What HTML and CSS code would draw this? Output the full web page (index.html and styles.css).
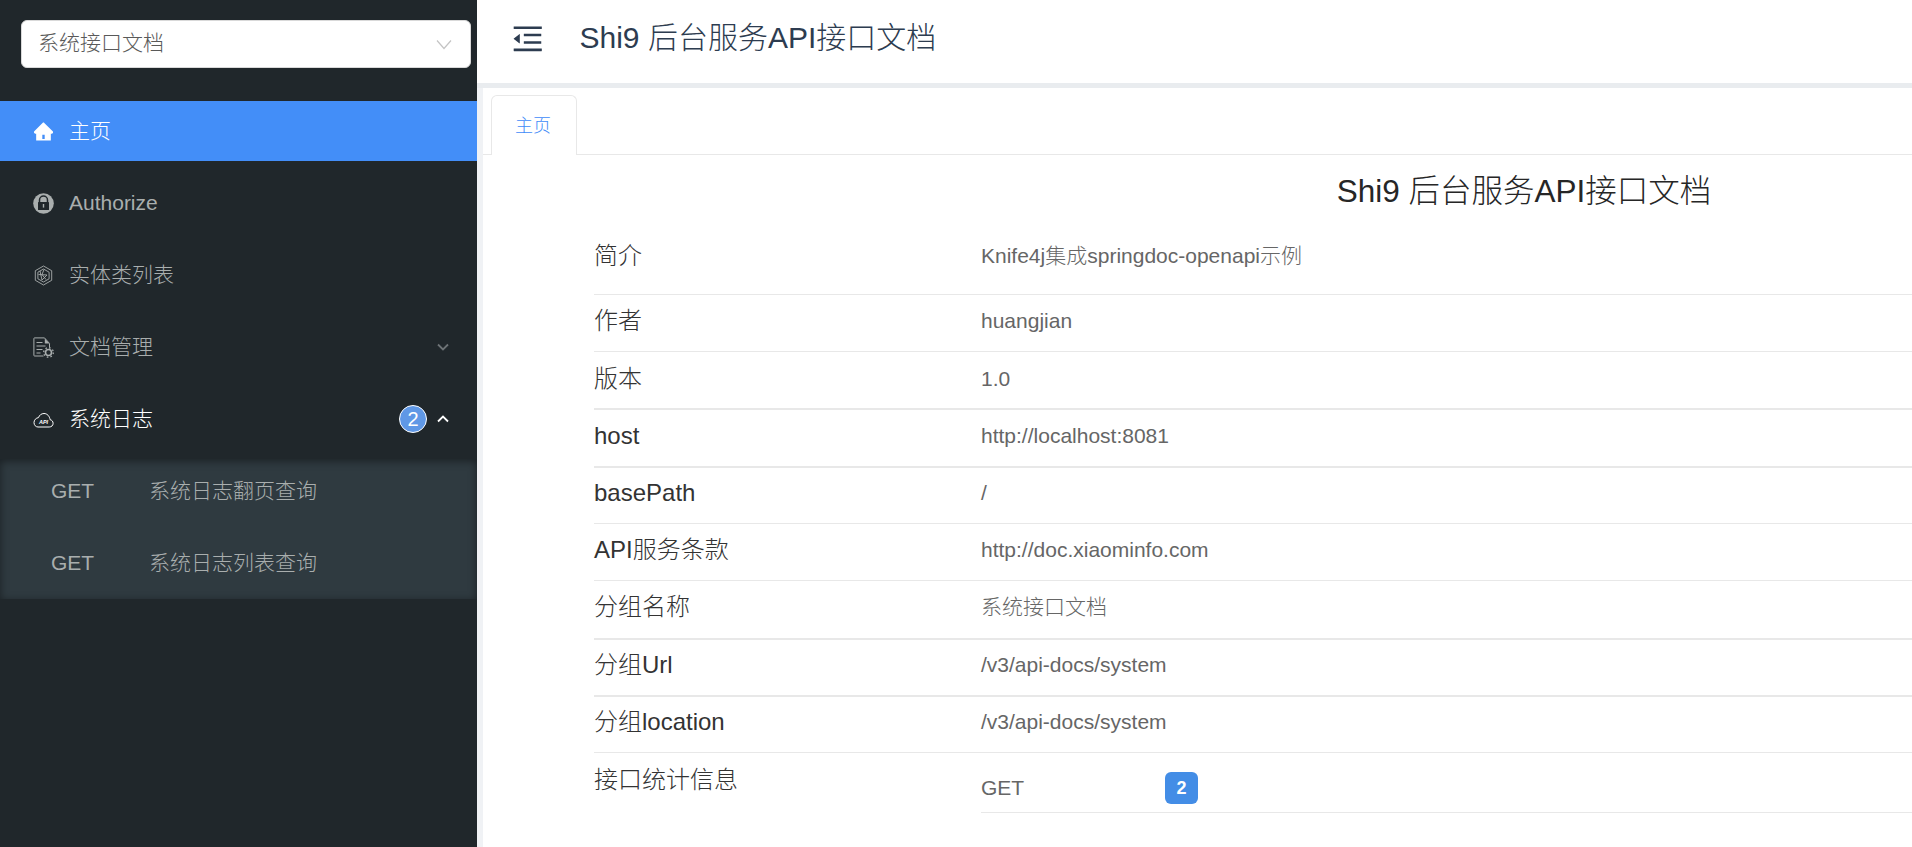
FILE: index.html
```html
<!DOCTYPE html>
<html lang="zh-CN">
<head>
<meta charset="utf-8">
<title>Shi9 后台服务API接口文档</title>
<link rel="stylesheet" href="styles.css">
</head>
<body>
<div class="app">
  <aside class="sidebar">
    <div class="select">
      <span>系统接口文档</span>
      <svg class="select-arrow" viewBox="0 0 16 10"><path d="M1 1l7 8 7-8" fill="none" stroke="#c4c4c4" stroke-width="1.2"/></svg>
    </div>
    <nav class="menu">
      <a class="item active">
        <span class="icon-box"><svg class="icon-home" viewBox="64 64 896 896"><path fill="currentColor" d="M946.5 505L560.1 118.8l-25.9-25.9a31.5 31.5 0 0 0-44.4 0L77.5 505a63.9 63.9 0 0 0-18.8 46c.4 35.2 29.7 63.3 64.9 63.3h42.5V940h691.8V614.3h43.4c17.1 0 33.2-6.7 45.3-18.8a63.6 63.6 0 0 0 18.7-45.3c0-17-6.7-33.1-18.8-45.2zM568 868H456V664h112v204z"/></svg></span>
        <span class="item-text">主页</span>
      </a>
      <a class="item">
        <svg class="icon" viewBox="0 0 21 21"><circle cx="10.5" cy="10.5" r="10.3" fill="#a9aeae"/><path d="M6.5 9.5V7a4 4 0 0 1 8 0v2.500" fill="none" stroke="#20272b" stroke-width="1.5"/><rect x="5" y="9" width="11" height="8" rx=".6" fill="#20272b"/><rect x="9.8" y="11" width="1.4" height="3.6" fill="#a9aeae"/></svg>
        <span class="item-text">Authorize</span>
      </a>
      <a class="item">
        <svg class="icon" viewBox="0 0 21 21" fill="none" stroke="currentColor" stroke-width=".9"><path d="M10.5 1l8.2 4.7v9.6l-8.2 4.7-8.2-4.7V5.7z"/><path d="M10.5 4l5.6 3.2v6.6l-5.6 3.2-5.6-3.2V7.2zM7 6l2 9 5-5-8.500-.5M11 4.500l-2 5 4 5"/></svg>
        <span class="item-text">实体类列表</span>
      </a>
      <a class="item">
        <svg class="icon" viewBox="0 0 21 21" fill="none" stroke="currentColor"><path d="M10.500 19H1.500a.6.6 0 0 1-.6-.6V1.500a.6.6 0 0 1 .6-.6h10l5 5.500v4" stroke-width="1"/><path d="M11.800 1.500l4.500 5h-4.500z" fill="currentColor" stroke="none"/><path d="M3.500 5.500h6M3.500 9h9M3.500 12.500h6M3.500 16h4" stroke-width="1"/><circle cx="15.500" cy="15.500" r="3" stroke-width="1.600"/><circle cx="15.500" cy="15.500" r="4.800" stroke-width="1.300" stroke-dasharray="1.600 2.170"/></svg>
        <span class="item-text">文档管理</span>
        <svg class="chev" viewBox="0 0 12 8"><path d="M1 1.500l5 5 5-5" fill="none" stroke="#6d7376" stroke-width="1.800"/></svg>
      </a>
      <a class="item open">
        <svg class="icon" viewBox="0 0 21 21"><path d="M5 18h11.200c2.300 0 3.900-1.500 3.900-3.700 0-1.900-1.300-3.300-3-3.600C16.600 7.200 14.200 4.500 11 4.500 8.400 4.500 6.300 6.200 5.500 8.600 3 8.900 1 11 1 13.600c0 2.500 1.800 4.400 4 4.400z" fill="none" stroke="currentColor" stroke-width="1"/><text class="api-mark" x="10.500" y="15">API</text></svg>
        <span class="item-text">系统日志</span>
        <span class="count">2</span>
        <svg class="chev" viewBox="0 0 12 8"><path d="M1 6.500l5-5 5 5" fill="none" stroke="#fff" stroke-width="1.800"/></svg>
      </a>
      <div class="submenu">
        <a class="sub"><span class="method">GET</span><span>系统日志翻页查询</span></a>
        <a class="sub"><span class="method">GET</span><span>系统日志列表查询</span></a>
      </div>
    </nav>
  </aside>
  <main class="main">
    <header class="topbar">
      <svg class="toggle" viewBox="64 64 896 896"><path fill="currentColor" d="M408 442h480c4.400 0 8-3.600 8-8v-56c0-4.400-3.600-8-8-8H408c-4.400 0-8 3.600-8 8v56c0 4.400 3.600 8 8 8zm-8 204c0 4.400 3.600 8 8 8h480c4.400 0 8-3.600 8-8v-56c0-4.400-3.600-8-8-8H408c-4.400 0-8 3.600-8 8v56zm504-486H120c-4.400 0-8 3.600-8 8v56c0 4.400 3.600 8 8 8h784c4.400 0 8-3.600 8-8v-56c0-4.400-3.600-8-8-8zm0 632H120c-4.400 0-8 3.600-8 8v56c0 4.400 3.600 8 8 8h784c4.400 0 8-3.600 8-8v-56c0-4.400-3.600-8-8-8zM115.400 518.900L271.700 642c5.800 4.600 14.400.5 14.400-6.900V388.900c0-7.400-8.500-11.500-14.400-6.900L115.400 505.100a8.950 8.950 0 0 0 0 13.800z"/></svg>
      <h1 class="page-title">Shi9 后台服务API接口文档</h1>
    </header>
    <div class="band"></div>
    <section class="pane">
      <div class="tabs"><div class="tab">主页</div></div>
      <div class="doc">
        <h2 class="doc-title">Shi9 后台服务API接口文档</h2>
        <div class="row first"><div class="label">简介</div><div class="value">Knife4j集成springdoc-openapi示例</div></div>
        <div class="row"><div class="label">作者</div><div class="value">huangjian</div></div>
        <div class="row tall thick lower"><div class="label">版本</div><div class="value">1.0</div></div>
        <div class="row tall thick"><div class="label">host</div><div class="value">http://localhost:8081</div></div>
        <div class="row short higher"><div class="label">basePath</div><div class="value">/</div></div>
        <div class="row"><div class="label">API服务条款</div><div class="value">http://doc.xiaominfo.com</div></div>
        <div class="row taller thick"><div class="label">分组名称</div><div class="value">系统接口文档</div></div>
        <div class="row thick higher"><div class="label">分组Url</div><div class="value">/v3/api-docs/system</div></div>
        <div class="row short higher"><div class="label">分组location</div><div class="value">/v3/api-docs/system</div></div>
        <div class="row last">
          <div class="label">接口统计信息</div>
          <div class="stat"><span class="stat-name">GET</span><span class="stat-count">2</span></div>
        </div>
      </div>
    </section>
  </main>
</div>
</body>
</html>
```
FILE: styles.css
```css
* { box-sizing: border-box; }
html, body { margin: 0; height: 100%; overflow: hidden; }
body {
  font-family: "Liberation Sans", "Noto Sans CJK SC", sans-serif;
  font-weight: 300;
  font-size: 21px;
  line-height: 32px;
  background: #fff;
}
.app { display: flex; height: 847px; }

.sidebar { width: 477px; flex: none; background: #20272b; color: #a9aeae; padding-top: 20px; }
.select {
  margin-left: 21px; width: 450px; height: 48px; padding: 0 18px 2px 16px;
  display: flex; align-items: center; justify-content: space-between;
  background: #fff; border: 1px solid #d9d9d9; border-radius: 6px;
  color: #595959; font-size: 21px;
}
.select-arrow { width: 16px; height: 11px; margin-top: 3px; }
.menu { margin-top: 33px; }
.item {
  height: 60px; margin-bottom: 12px; padding-left: 33px;
  display: flex; align-items: center;
}
.item.active { background: #438ef8; color: #fff; }
.item.open { color: #fff; margin-bottom: 10px; }
.icon { width: 21px; height: 21px; flex: none; }
.icon-box { width: 21px; height: 21px; flex: none; display: flex; align-items: center; justify-content: center; }
.icon-home { width: 19px; height: 19px; }
.item-text { margin-left: 15px; flex: 1; }
.api-mark { fill: currentColor; font-size: 5.500px; font-style: italic; font-weight: 700; text-anchor: middle; }
.chev { width: 12px; height: 8px; margin-right: 28px; flex: none; }
.count {
  width: 28px; height: 28px; margin-right: 10px; border-radius: 50%;
  display: flex; align-items: center; justify-content: center;
  background: #5f98e6; border: 1.500px solid #fff; color: #fff; font-size: 20px; font-weight: 400;
}
.submenu {
  background: #2f3a40; padding: 2px 0 6px;
  box-shadow: inset 0 2px 8px rgba(0, 0, 0, .45);
}
.sub { height: 60px; padding-left: 51px; display: flex; align-items: center; }
.sub + .sub { margin-top: 12px; }
.method { width: 98px; }

.main { flex: 1; min-width: 0; display: flex; flex-direction: column; overflow: hidden; }
.topbar { height: 83px; flex: none; display: flex; align-items: center; padding: 0 0 5px 35px; color: #2d3c50; }
.toggle { width: 31.500px; height: 31.500px; flex: none; }
.page-title { margin: 0 0 3px 36px; font-size: 30px; line-height: 44px; font-weight: 300; }
.band { height: 5px; flex: none; background: #e9ecef; }
.pane { flex: 1; margin-left: 0; border-left: 6px solid #f0f2f5; background: #fff; }
.tabs { height: 67px; padding: 7px 0 0 8px; border-bottom: 1px solid #e8e8e8; }
.tab {
  width: 86px; height: 60px; padding-right: 2px; display: flex; align-items: center; justify-content: center;
  background: #fff; border: 1px solid #e8e8e8; border-bottom: 0; border-radius: 6px 6px 0 0;
  color: #3f8cf8; font-size: 18px; position: relative; z-index: 1;
}
.doc { width: 1860px; margin-left: 111px; }
.doc-title {
  margin: 0; height: 63px; padding-top: 13px; line-height: 46px;
  font-size: 31.500px; font-weight: 300; text-align: center; color: #262626;
}
.row {
  height: 57px; display: flex; padding-top: 8px;
  line-height: 36px; border-bottom: 1px solid #e8e8e8;
}
.row.first { height: 77px; padding-top: 20px; }
.row.short { height: 56px; }
.row.tall { height: 58px; }
.row.taller { height: 59px; }
.row.thick { border-bottom-width: 2px; }
.row.lower { padding-top: 9px; }
.row.higher { padding-top: 7px; }
.row.last { height: 60px; padding-top: 0; border-bottom: 0; }
.label { width: 387px; flex: none; font-size: 24px; color: #333; }
.last .label { padding-top: 9px; }
.value { color: #666; }
.stat {
  flex: 1; display: flex; align-items: center; height: 60px;
  padding: 19px 0 8px; border-bottom: 1px solid #e8e8e8; color: #666;
}
.stat-name { width: 184px; }
.stat-count {
  width: 33px; height: 32px; display: flex; align-items: center; justify-content: center;
  background: #438de6; border-radius: 6px; color: #fff; font-size: 18px; font-weight: 700;
}
```
